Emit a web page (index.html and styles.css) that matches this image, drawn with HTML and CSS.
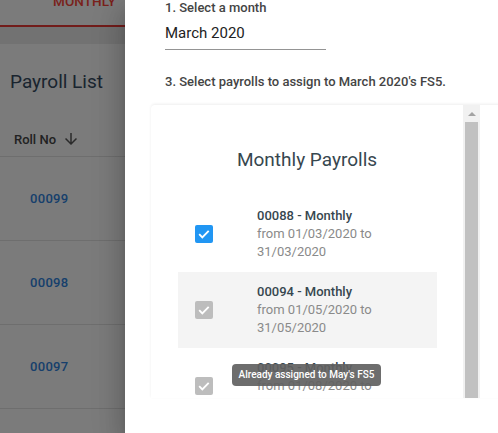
FILE: index.html
```html
<!DOCTYPE html>
<html>
<head>
<meta charset="utf-8">
<link rel="stylesheet" href="styles.css">
</head>
<body>
<div class="page">
  <div class="tabbar"><span class="tab">Monthly</span></div>
  <div class="subbar"></div>
  <h1 class="title">Payroll List</h1>
  <div class="thead">
    <span class="th">Roll No</span>
    <svg class="sort" width="18" height="18" viewBox="0 0 24 24"><path d="M20 12l-1.41-1.41L13 16.17V4h-2v12.17l-5.58-5.59L4 12l8 8 8-8z" fill="#555"/></svg>
  </div>
  <div class="trow"><span class="roll">00099</span></div>
  <div class="trow"><span class="roll">00098</span></div>
  <div class="trow"><span class="roll">00097</span></div>
  <div class="trow trow-last"></div>
</div>
<div class="backdrop"></div>
<aside class="drawer">
  <div class="field-label">1. Select a month</div>
  <div class="month-input">March 2020</div>
  <div class="field-label step3">3. Select payrolls to assign to March 2020's FS5.</div>
  <div class="card">
    <div class="list">
      <h2 class="list-title">Monthly Payrolls</h2>
      <div class="prow">
        <span class="cb cb-on"><svg width="18" height="18" viewBox="0 0 18 18"><path d="M4.2 9.2l3.1 3.1 6.4-6.4" fill="none" stroke="#fff" stroke-width="1.9"/></svg></span>
        <div class="ptext">
          <div class="pname">00088 - Monthly</div>
          <div class="pdate">from 01/03/2020 to 31/03/2020</div>
        </div>
      </div>
      <div class="prow prow-hover">
        <span class="cb cb-dis"><svg width="18" height="18" viewBox="0 0 18 18"><path d="M4.2 9.2l3.1 3.1 6.4-6.4" fill="none" stroke="#fff" stroke-width="1.9"/></svg></span>
        <div class="ptext">
          <div class="pname">00094 - Monthly</div>
          <div class="pdate">from 01/05/2020 to 31/05/2020</div>
        </div>
      </div>
      <div class="prow">
        <span class="cb cb-dis"><svg width="18" height="18" viewBox="0 0 18 18"><path d="M4.2 9.2l3.1 3.1 6.4-6.4" fill="none" stroke="#fff" stroke-width="1.9"/></svg></span>
        <div class="ptext">
          <div class="pname">00095 - Monthly</div>
          <div class="pdate">from 01/08/2020 to 31/08/2020</div>
        </div>
        <div class="tooltip">Already assigned to May's FS5</div>
      </div>
    </div>
    <div class="scrollbar">
      <div class="sb-up"><span class="tri"></span></div>
      <div class="sb-thumb"></div>
    </div>
  </div>
</aside>
</body>
</html>
```
FILE: styles.css
```css
html, body {
  margin: 0;
  padding: 0;
}
body {
  width: 498px;
  height: 433px;
  overflow: hidden;
  position: relative;
  font-family: Roboto, "Noto Sans", sans-serif;
  background: #f6f6f6;
}
.page {
  width: 498px;
  height: 433px;
  overflow: hidden;
}
.tabbar {
  display: flow-root;
  height: 25px;
  border-bottom: 2px solid #e53935;
}
.tab {
  display: block;
  margin-left: 53px;
  margin-top: -7px;
  line-height: 16px;
  font-size: 13.5px;
  font-weight: 500;
  letter-spacing: 0.1px;
  text-transform: uppercase;
  color: #f44336;
}
.subbar {
  height: 17px;
  background: #e4e4e4;
}
.title {
  margin: 26px 0 0 10px;
  font-size: 19px;
  line-height: 24px;
  font-weight: 400;
  color: #34495e;
}
.thead {
  display: flex;
  align-items: center;
  height: 16px;
  padding: 37px 0 9px 14px;
  border-bottom: 1px solid #dcdcdc;
}
.th {
  font-size: 13px;
  font-weight: 500;
  color: #444;
}
.sort {
  margin-left: 6px;
}
.trow {
  height: 83px;
  display: flex;
  align-items: center;
  padding-left: 30px;
  border-bottom: 1px solid #dcdcdc;
}
.roll {
  font-size: 13px;
  font-weight: 500;
  letter-spacing: 0.3px;
  color: #2f7fd8;
}
.backdrop {
  position: absolute;
  inset: 0;
  background: rgba(0, 0, 0, 0.5);
}
.drawer {
  position: absolute;
  top: 0;
  right: 0;
  bottom: 0;
  width: 347px;
  padding-left: 26px;
  background: #fff;
  overflow: hidden;
  box-shadow: 0 8px 10px -5px rgba(0,0,0,.2), 0 16px 24px 2px rgba(0,0,0,.14), 0 6px 30px 5px rgba(0,0,0,.12);
}
.field-label {
  margin-left: 14px;
  font-size: 13px;
  line-height: 16px;
  font-weight: 500;
  color: #444;
}
.month-input {
  margin: 8px 0 0 14px;
  width: 161px;
  font-size: 15px;
  line-height: 18px;
  padding-bottom: 7px;
  color: #222;
  border-bottom: 1px solid #949494;
}
.step3 {
  margin-top: 24px;
}
.card {
  margin-top: 15px;
  width: 372px;
  height: 293px;
  display: flex;
  background: #fff;
  border-radius: 4px 4px 0 0;
  overflow: hidden;
  box-shadow: 0 -1px 3px rgba(0, 0, 0, 0.07);
}
.list {
  width: 312px;
  flex: none;
}
.list-title {
  margin: 0;
  padding: 43px 0 24px;
  text-align: center;
  font-size: 19px;
  line-height: 24px;
  font-weight: 400;
  color: #37474f;
}
.prow {
  position: relative;
  margin: 0 26px 0 27px;
  height: 76px;
  display: flex;
  align-items: center;
}
.prow-hover {
  background: #f4f4f4;
}
.cb {
  flex: none;
  width: 18px;
  height: 18px;
  margin-left: 17px;
  border-radius: 2px;
  display: block;
}
.cb svg {
  display: block;
}
.cb-on {
  background: #2196f3;
}
.cb-dis {
  background: #bdbdbd;
}
.ptext {
  margin-left: 44px;
  width: 140px;
  font-size: 13px;
  line-height: 18px;
}
.pname {
  font-weight: 500;
  color: #37474f;
}
.pdate {
  color: #8a8a8a;
}
.tooltip {
  position: absolute;
  left: 54px;
  top: 16px;
  width: 149px;
  height: 22px;
  line-height: 22px;
  border-radius: 4px;
  background: rgba(97, 97, 97, 0.92);
  color: #fff;
  font-size: 10px;
  font-weight: 500;
  text-align: center;
}
.scrollbar {
  flex: none;
  width: 17px;
  background: #f1f1f1;
  display: flex;
  flex-direction: column;
}
.sb-up {
  height: 17px;
  display: flex;
  align-items: center;
  justify-content: center;
}
.tri {
  width: 0;
  height: 0;
  border-left: 4px solid transparent;
  border-right: 4px solid transparent;
  border-bottom: 4px solid #a3a3a3;
}
.sb-thumb {
  flex: 1;
  margin: 0 2px;
  background: #c1c1c1;
}
```
